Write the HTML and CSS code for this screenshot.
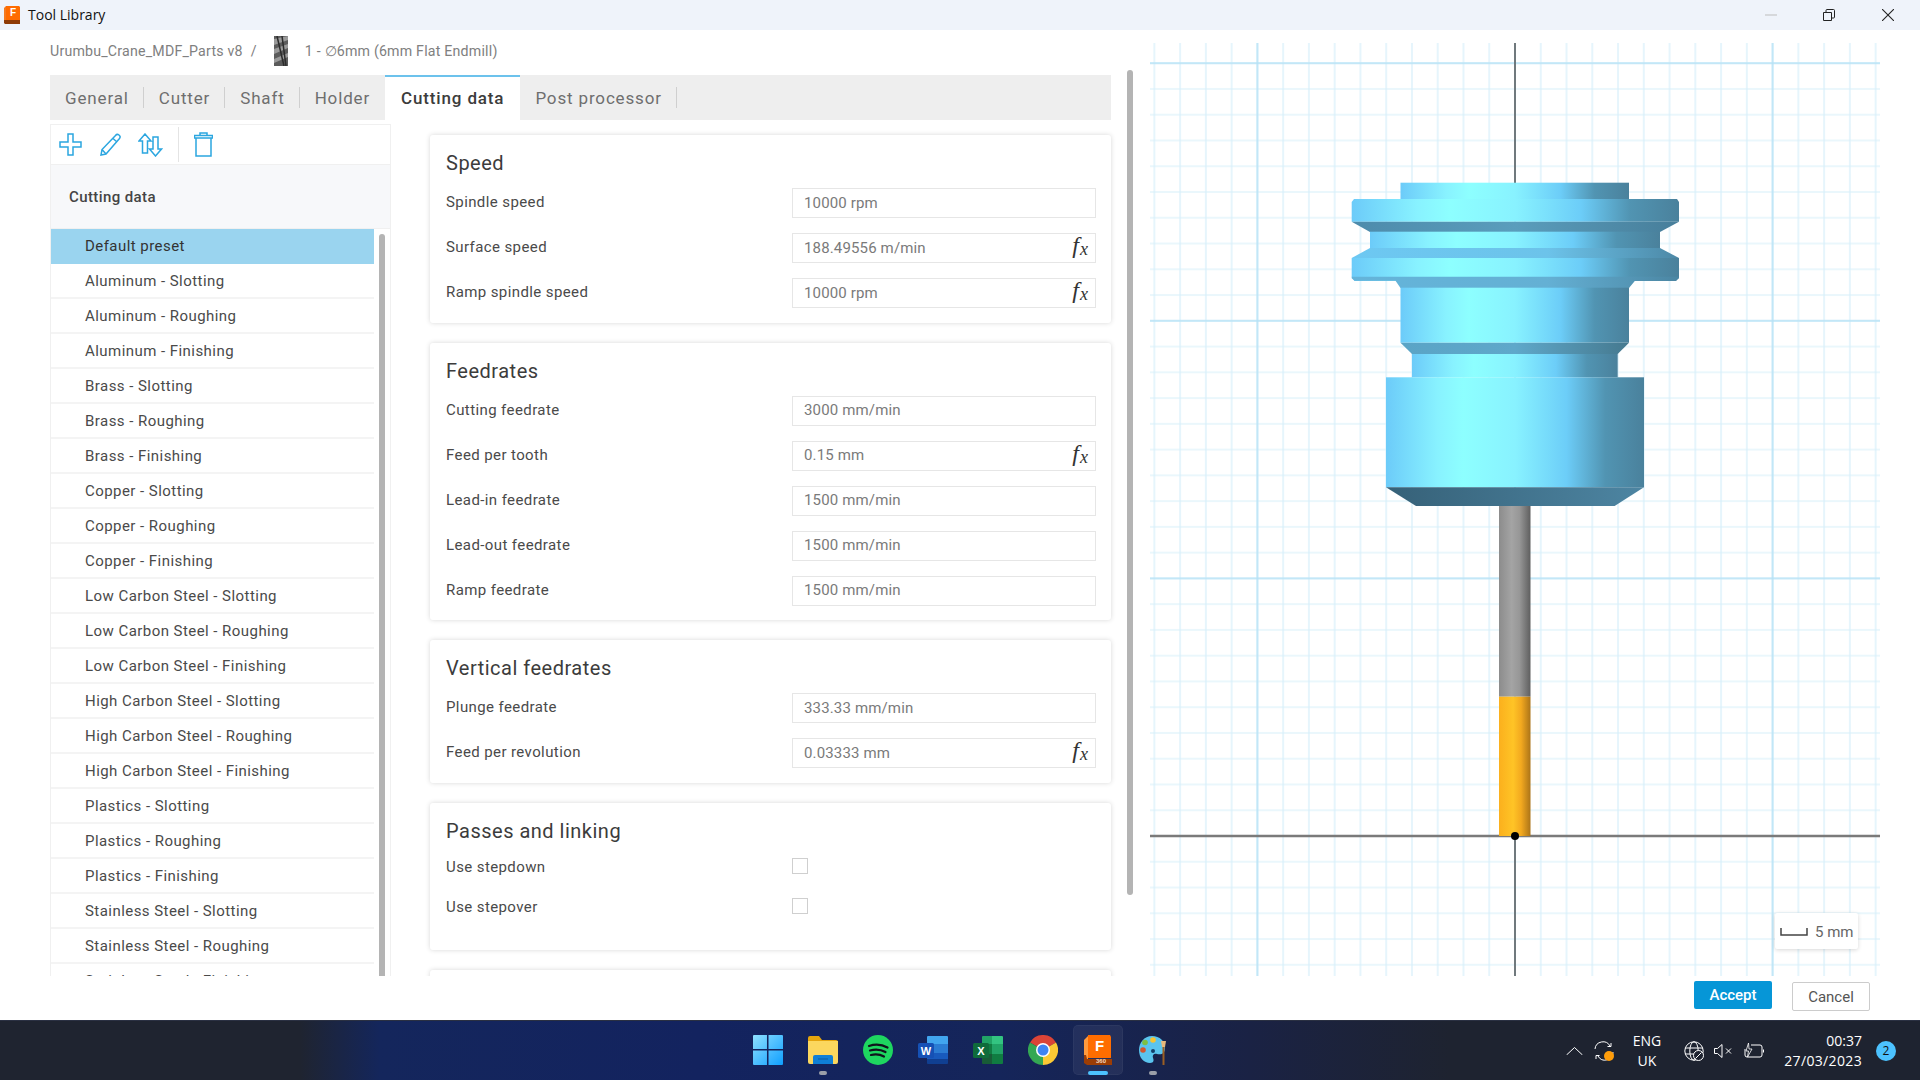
FILE: index.html
```html
<!DOCTYPE html>
<html lang="en">
<head>
<meta charset="utf-8">
<title>Tool Library</title>
<link rel="stylesheet" href="styles.css">
</head>
<body>
<div class="app">
  <header class="titlebar">
    <svg class="app-icon" viewBox="0 0 18 20"><path d="M1 3 3 1h13v15H1z" fill="#f47a20"/><path d="M3 1h13l1 1v13H3z" fill="#ff6b00"/><path d="M1 15h16v4H2l-1-1z" fill="#8f3b06"/><text x="10" y="11" class="app-icon-f">F</text></svg>
    <span class="title-text">Tool Library</span>
    <div class="window-controls">
      <svg class="wc wc-min" viewBox="0 0 12 12"><path d="M0 6h12" stroke="#bdbdbd" fill="none"/></svg>
      <svg class="wc wc-max" viewBox="0 0 12 12"><path d="M.5 3.5h8v8h-8z M3 3V1.5A1 1 0 0 1 4 .5h6.5a1 1 0 0 1 1 1V8a1 1 0 0 1-1 1H9" stroke="#222" fill="none"/></svg>
      <svg class="wc wc-close" viewBox="0 0 12 12"><path d="M0 0l12 12M12 0 0 12" stroke="#222" stroke-width="1.1" fill="none"/></svg>
    </div>
  </header>

  <main class="window">
    <div class="content">
      <section class="editor">
        <div class="crumb">
          <span>Urumbu_Crane_MDF_Parts v8</span>
          <span class="crumb-sep">/</span>
          <svg class="crumb-tool" viewBox="0 0 14 30">
            <rect width="14" height="30" fill="#5b5b5b"/>
            <path d="M0 3 14 0v4L0 9zM0 13l14-5v4L0 18zM0 23l14-6v4L0 27z" fill="#9a9a9a"/>
            <path d="M3 0 10 30M8 0l4 30" stroke="#2c2c2c" stroke-width="1.5" fill="none"/>
          </svg>
          <span>1 - ∅6mm (6mm Flat Endmill)</span>
        </div>
        <nav class="tabs">
          <span class="tab">General</span>
          <span class="tab">Cutter</span>
          <span class="tab">Shaft</span>
          <span class="tab tab-last">Holder</span>
          <span class="tab tab-active">Cutting data</span>
          <span class="tab">Post processor</span>
        </nav>
        <div class="work">
          <aside class="presets">
            <div class="toolbar">
              <svg class="tb tb-plus" viewBox="0 0 23 23"><path d="M9 1h5v8h8v5h-8v8H9v-8H1V9h8z" class="tb-line"/></svg>
              <svg class="tb tb-pen" viewBox="0 0 23 23"><path d="M16.5 2.5a2.5 2.5 0 0 1 4 3L7 21l-5 1 1-5.500zM14 5.500l4 3.500M3 16.500 7 21" class="tb-line"/></svg>
              <svg class="tb tb-swap" viewBox="0 0 25 24"><path d="M7 1 1 8h3.500v12h5V8H13zM17.500 23l6-7H20V4h-5v12h-3.500z" class="tb-line"/></svg>
              <span class="tb-divider"></span>
              <svg class="tb tb-trash" viewBox="0 0 19 25"><path d="M2 6h15v18H2zM.5 3.500h18V6H.5zM6 3.500V1h7v2.500" class="tb-line"/></svg>
            </div>
            <div class="preset-head">Cutting data</div>
            <div class="preset-body">
              <ul class="rows">
                <li class="row row-on">Default preset</li>
                <li class="row">Aluminum - Slotting</li>
                <li class="row">Aluminum - Roughing</li>
                <li class="row">Aluminum - Finishing</li>
                <li class="row">Brass - Slotting</li>
                <li class="row">Brass - Roughing</li>
                <li class="row">Brass - Finishing</li>
                <li class="row">Copper - Slotting</li>
                <li class="row">Copper - Roughing</li>
                <li class="row">Copper - Finishing</li>
                <li class="row">Low Carbon Steel - Slotting</li>
                <li class="row">Low Carbon Steel - Roughing</li>
                <li class="row">Low Carbon Steel - Finishing</li>
                <li class="row">High Carbon Steel - Slotting</li>
                <li class="row">High Carbon Steel - Roughing</li>
                <li class="row">High Carbon Steel - Finishing</li>
                <li class="row">Plastics - Slotting</li>
                <li class="row">Plastics - Roughing</li>
                <li class="row">Plastics - Finishing</li>
                <li class="row">Stainless Steel - Slotting</li>
                <li class="row">Stainless Steel - Roughing</li>
                <li class="row">Stainless Steel - Finishing</li>
              </ul>
              <div class="list-scroll"></div>
            </div>
          </aside>
          <div class="cards">
            <section class="card">
              <h2>Speed</h2>
              <div class="field"><label>Spindle speed</label><div class="input">10000 rpm</div></div>
              <div class="field"><label>Surface speed</label><div class="input">188.49556 m/min<span class="fx"><i>f</i><i class="fx-x">x</i></span></div></div>
              <div class="field"><label>Ramp spindle speed</label><div class="input">10000 rpm<span class="fx"><i>f</i><i class="fx-x">x</i></span></div></div>
            </section>
            <section class="card">
              <h2>Feedrates</h2>
              <div class="field"><label>Cutting feedrate</label><div class="input">3000 mm/min</div></div>
              <div class="field"><label>Feed per tooth</label><div class="input">0.15 mm<span class="fx"><i>f</i><i class="fx-x">x</i></span></div></div>
              <div class="field"><label>Lead-in feedrate</label><div class="input">1500 mm/min</div></div>
              <div class="field"><label>Lead-out feedrate</label><div class="input">1500 mm/min</div></div>
              <div class="field"><label>Ramp feedrate</label><div class="input">1500 mm/min</div></div>
            </section>
            <section class="card">
              <h2>Vertical feedrates</h2>
              <div class="field"><label>Plunge feedrate</label><div class="input">333.33 mm/min</div></div>
              <div class="field"><label>Feed per revolution</label><div class="input">0.03333 mm<span class="fx"><i>f</i><i class="fx-x">x</i></span></div></div>
            </section>
            <section class="card card-check">
              <h2>Passes and linking</h2>
              <div class="field field-check"><label>Use stepdown</label><div class="check-cell"><span class="check"></span></div></div>
              <div class="field field-check"><label>Use stepover</label><div class="check-cell"><span class="check"></span></div></div>
            </section>
            <section class="card card-next"></section>
          </div>
        </div>
        <div class="page-scroll"></div>
      </section>

      <section class="viewer">
        <svg class="viewer-svg" viewBox="1150 43 730 933">
          <defs>
            <pattern id="minor" patternUnits="userSpaceOnUse" x="1502.12" y="823.12" width="25.76" height="25.76">
              <path d="M12.880 0V25.760M0 12.880H25.760" stroke="#d6effa" stroke-width="1.2" fill="none"/>
            </pattern>
            <pattern id="major" patternUnits="userSpaceOnUse" x="1386.2" y="707.2" width="257.6" height="257.6">
              <path d="M128.800 0V257.600M0 128.800H257.600" stroke="#b6e2f6" stroke-width="1.500" fill="none"/>
            </pattern>
            <linearGradient id="bright">
              <stop offset="0" stop-color="#6ccbf9"/><stop offset=".2" stop-color="#88f2ff"/><stop offset=".3" stop-color="#8dffff"/><stop offset=".5" stop-color="#88f2ff"/><stop offset=".7" stop-color="#6ccdf8"/><stop offset=".85" stop-color="#5194b2"/><stop offset="1" stop-color="#4a819c"/>
            </linearGradient>
            <linearGradient id="ringDark"><stop offset="0" stop-color="#4d8bab"/><stop offset=".5" stop-color="#5a9dbc"/><stop offset="1" stop-color="#477e9a"/></linearGradient>
            <linearGradient id="ringMid"><stop offset="0" stop-color="#6dc8f2"/><stop offset=".6" stop-color="#6cc3ea"/><stop offset="1" stop-color="#4c88a6"/></linearGradient>
            <linearGradient id="ringLow"><stop offset="0" stop-color="#64b4da"/><stop offset=".6" stop-color="#64b0d4"/><stop offset="1" stop-color="#4b86a3"/></linearGradient>
            <linearGradient id="ringNeck"><stop offset="0" stop-color="#5aa4c6"/><stop offset=".5" stop-color="#5fa8ca"/><stop offset="1" stop-color="#45798f"/></linearGradient>
            <linearGradient id="ringBase"><stop offset="0" stop-color="#366178"/><stop offset="1" stop-color="#4d85a2"/></linearGradient>
            <linearGradient id="steel"><stop offset="0" stop-color="#8c8c8c"/><stop offset=".4" stop-color="#a4a4a4"/><stop offset=".65" stop-color="#979797"/><stop offset="1" stop-color="#5f5f5f"/></linearGradient>
            <linearGradient id="flute"><stop offset="0" stop-color="#fbb01d"/><stop offset=".45" stop-color="#ffc426"/><stop offset=".7" stop-color="#f3a91f"/><stop offset="1" stop-color="#ac7418"/></linearGradient>
          </defs>
          <rect x="1150" y="43" width="730" height="933" fill="url(#minor)"/>
          <rect x="1150" y="43" width="730" height="933" fill="url(#major)"/>
          <path d="M1515 43V183M1515 836V976" stroke="#555" stroke-width="1.500" fill="none"/>
          <path d="M1150 836H1880" stroke="#7a7a7a" stroke-width="2.500" fill="none"/>
          <rect x="1400.500" y="182.700" width="228.500" height="17" fill="url(#bright)"/>
          <path d="M1354 199H1677l2 3v19.700H1351.700V202z" fill="url(#bright)"/>
          <path d="M1351.700 221.700H1679L1660 232H1370z" fill="url(#ringDark)"/>
          <rect x="1370" y="231.700" width="290" height="16.500" fill="url(#bright)"/>
          <path d="M1370 248H1660L1679 258H1351.700z" fill="url(#ringMid)"/>
          <path d="M1351.700 258H1679v19l-3 4H1354.500l-2.800-4z" fill="url(#bright)"/>
          <path d="M1351.700 276.700H1679v1.500l-3 2.500H1635L1629 288H1400.500L1395.500 280.700H1354.500l-2.800-2.500z" fill="url(#ringLow)"/>
          <rect x="1400.500" y="287.700" width="228.500" height="55" fill="url(#bright)"/>
          <path d="M1400.500 342.700H1629L1617.700 354H1412z" fill="url(#ringNeck)"/>
          <rect x="1412" y="354" width="205.700" height="23.300" fill="url(#bright)"/>
          <rect x="1386" y="377.300" width="258" height="110" fill="url(#bright)"/>
          <path d="M1386 487.300H1644L1614.600 506H1416z" fill="url(#ringBase)"/>
          <rect x="1499" y="506" width="31.500" height="190.700" fill="url(#steel)"/>
          <rect x="1499" y="696.700" width="31.500" height="139.300" fill="url(#flute)"/>
          <circle cx="1515" cy="836" r="4" fill="#000"/>
        </svg>
        <div class="scale">
          <svg class="scale-mark" viewBox="0 0 28 8"><path d="M1 0V7H27V0" fill="none" stroke="#444" stroke-width="1.500"/></svg>
          <span>5 mm</span>
        </div>
      </section>
    </div>
    <footer class="actions">
      <button class="btn btn-primary">Accept</button>
      <button class="btn btn-plain">Cancel</button>
    </footer>
  </main>

  <footer class="taskbar">
    <span></span>
    <div class="task-icons">
      <div class="task"><svg class="ti" viewBox="0 0 29 29"><defs><linearGradient id="win" x1="0" y1="0" x2="1" y2="1"><stop offset="0" stop-color="#8fe0ff"/><stop offset="1" stop-color="#0f9fff"/></linearGradient></defs><path d="M1 0h12.500v13.500H0V1a1 1 0 0 1 1-1zM15 0h13a1 1 0 0 1 1 1v12.500H15zM0 15h13.500v14H1a1 1 0 0 1-1-1zM15 15h14v13a1 1 0 0 1-1 1H15z" fill="url(#win)"/></svg></div>
      <div class="task task-open"><svg class="ti" viewBox="0 0 30 28"><path d="M0 2a2 2 0 0 1 2-2h9l3 4h14a2 2 0 0 1 2 2v4H0z" fill="#e5a50d"/><path d="M0 5h30v21a2 2 0 0 1-2 2H2a2 2 0 0 1-2-2z" fill="#fbd75e"/><path d="M5 21a2 2 0 0 1 2-2h16a2 2 0 0 1 2 2v7H5z" fill="#0f7fd6"/><path d="M10 23h10" stroke="#0a5da3" stroke-width="1" fill="none"/></svg></div>
      <div class="task"><svg class="ti" viewBox="0 0 30 30"><circle cx="15" cy="15" r="15" fill="#1ed760"/><path d="M6 11c6-2 13-1.500 18.500 1.500M7 15.500c5-1.500 11-1 15.500 1.500M8 20c4-1 9-.7 13 1.500" stroke="#10141c" stroke-width="2.200" stroke-linecap="round" fill="none"/></svg></div>
      <div class="task"><svg class="ti" viewBox="0 0 30 28"><path d="M9 1a1 1 0 0 1 1-1h19a1 1 0 0 1 1 1v7H9z" fill="#41a5ee"/><path d="M9 8h21v9H9z" fill="#2b7cd3"/><path d="M9 17h21v6H9z" fill="#185abd"/><path d="M9 23h21v4a1 1 0 0 1-1 1H10a1 1 0 0 1-1-1z" fill="#103f91"/><rect y="7" width="16" height="15" rx="1.500" fill="#1551b5"/><text x="8" y="18.500" class="ti-letter">W</text></svg></div>
      <div class="task"><svg class="ti" viewBox="0 0 30 28"><path d="M9 1a1 1 0 0 1 1-1h9v8H9z" fill="#21a366"/><path d="M19 0h10a1 1 0 0 1 1 1v7H19z" fill="#33c481"/><path d="M9 8h10v10H9z" fill="#107c41"/><path d="M19 8h11v10H19z" fill="#21a366"/><path d="M9 18h10v10H10a1 1 0 0 1-1-1z" fill="#185c37"/><path d="M19 18h11v9a1 1 0 0 1-1 1H19z" fill="#107c41"/><rect y="7" width="16" height="15" rx="1.500" fill="#0f6b3b"/><text x="8" y="18.500" class="ti-letter">X</text></svg></div>
      <div class="task"><svg class="ti" viewBox="0 0 30 30"><path d="M15 15 2 7.500A15 15 0 0 1 28 7.500z" fill="#db4437"/><path d="M15 15 28 7.500A15 15 0 0 1 15 30z" fill="#fcc934"/><path d="M15 15V30A15 15 0 0 1 2 7.500z" fill="#34a853"/><circle cx="15" cy="15" r="7" fill="#fff"/><circle cx="15" cy="15" r="5.500" fill="#3f84f4"/></svg></div>
      <div class="task task-active"><svg class="ti" viewBox="0 0 28 30"><path d="M0 5 4 1v24H0z" fill="#ff9a3d"/><path d="M4 0h22l1 2v21H4z" fill="#ff6d00"/><path d="M0 20h2l1 4h25v6H3l-3-2z" fill="#9c3d05"/><text x="15.500" y="16" class="ti-f">F</text><text x="17" y="28" class="ti-360">360</text></svg></div>
      <div class="task task-open"><svg class="ti" viewBox="0 0 28 30"><path d="M13 1C5 1 0 8 0 15c0 8 5 13 11 13 4 0 4-3 3-5-1-3 1-5 4-4 4 1 8 0 8-6C26 6 21 1 13 1z" fill="#5ac4ee"/><circle cx="14" cy="5" r="2.800" fill="#f6c431"/><circle cx="6" cy="7.500" r="2.800" fill="#7fbf42"/><circle cx="4" cy="15" r="2.800" fill="#d2552e"/><circle cx="14" cy="16" r="2" fill="#12406a"/><path d="M22 6h5l-1 6h-3z" fill="#e7b97c"/><path d="M23.500 12h2v18h-2z" fill="#9b5f23"/></svg></div>
    </div>
    <div class="tray">
      <svg class="tr tr-chev" viewBox="0 0 17 8"><path d="M.5 8 8.500.5 16.500 8" fill="none" stroke="#fff" stroke-width="1"/></svg>
      <svg class="tr tr-sync" viewBox="0 0 20 20"><path d="M1 8a8 8 0 0 1 15-3M17 2v3.500h-3.500M19 11a8 8 0 0 1-15 4M2 18v-3.500h3.500" fill="none" stroke="#fff" stroke-width="1"/><circle cx="15" cy="15" r="5" fill="#ff9d0a"/></svg>
      <div class="lang"><span>ENG</span><span>UK</span></div>
      <svg class="tr tr-globe" viewBox="0 0 20 20"><circle cx="10" cy="10" r="9.200" fill="none" stroke="#fff"/><ellipse cx="10" cy="10" rx="4.200" ry="9.200" fill="none" stroke="#fff"/><path d="M1 7h18M1 13h18" stroke="#fff" fill="none"/><circle cx="14.500" cy="14.500" r="5" fill="#1e2330" stroke="#fff"/><path d="M11.500 17.500l6-6" stroke="#fff" fill="none"/></svg>
      <svg class="tr tr-vol" viewBox="0 0 19 14"><path d="M.5 4.500h3L8 .5v13l-4.500-4h-3zM12 4.500l5 5M17 4.500l-5 5" fill="none" stroke="#fff"/></svg>
      <svg class="tr tr-batt" viewBox="0 0 20 16"><path d="M7 2h9a2 2 0 0 1 2 2v8a2 2 0 0 1-2 2H3a2 2 0 0 1-2-2V6" fill="none" stroke="#fff"/><path d="M19 6.500h1v3h-1z" fill="#fff"/><path d="M4.500 0 2 8h2.500L3.500 14 8 6H5z" fill="#1e2330" stroke="#fff" stroke-width=".8"/></svg>
      <div class="clock"><span>00:37</span><span class="date">27/03/2023</span></div>
      <span class="badge">2</span>
    </div>
  </footer>
</div>
</body>
</html>
```
FILE: styles.css
```css
* { box-sizing: border-box; }
html, body { margin: 0; padding: 0; height: 100%; }
body { font-family: Roboto, "Liberation Sans", sans-serif; font-size: 15px; color: #4a4a4a; background: #fff; overflow: hidden; }
.app { width: 1920px; height: 1080px; display: flex; flex-direction: column; }

.titlebar { height: 30px; flex: none; background: #eff3fa; display: flex; align-items: center; padding-left: 3px; }
.app-icon { width: 18px; height: 20px; }
.app-icon-f { font: 700 10px "Liberation Sans", sans-serif; fill: #fff; text-anchor: middle; }
.title-text { margin-left: 7px; padding-bottom: 1px; font: 14px "Open Sans", sans-serif; color: #111; }
.window-controls { margin-left: auto; display: flex; align-items: center; padding-right: 26px; }
.wc { width: 12px; height: 12px; display: block; }
.wc-max { margin-left: 46px; }
.wc-close { margin-left: 47px; }

.window { flex: 1; display: flex; flex-direction: column; min-height: 0; background: #fff; }
.content { height: 946px; flex: none; display: flex; padding-left: 50px; }
.editor { width: 1083px; flex: none; display: flex; flex-direction: column; position: relative; }

.crumb { height: 45px; flex: none; display: flex; align-items: center; color: #808080; font-size: 14.2px; letter-spacing: .2px; padding-bottom: 4px; }
.crumb-sep { margin: 0 17px 0 8px; }
.crumb-tool { width: 14px; height: 30px; margin-right: 17px; }

.tabs { height: 45px; flex: none; width: 1061px; background: #eeeeee; display: flex; align-items: center; font-size: 17px; letter-spacing: .85px; color: #6e6e6e; }
.tab { height: 100%; display: flex; align-items: center; padding: 0 15px; position: relative; }
.tab::after { content: ""; position: absolute; right: 0; top: 12px; bottom: 12px; width: 1px; background: #cfcfcf; }
.tab-last::after, .tab-active::after { display: none; }
.tab-active { background: #fff; color: #3c3c3c; font-weight: 500; border-top: 2px solid #6cc2ec; padding: 0 16px 2px; }

.work { flex: 1; min-height: 0; display: flex; overflow: hidden; }

.presets { width: 341px; flex: none; margin-top: 4px; border: 1px solid #f0f0f0; border-bottom: 0; display: flex; flex-direction: column; min-height: 0; }
.toolbar { height: 40px; flex: none; display: flex; align-items: center; padding-left: 8px; border-bottom: 1px solid #f0f0f0; }
.tb { display: block; flex: none; }
.tb-line { fill: none; stroke: #2ba6e0; stroke-width: 1.5; }
.tb-plus { width: 23px; height: 23px; }
.tb-pen { width: 23px; height: 23px; margin-left: 17px; }
.tb-swap { width: 25px; height: 24px; margin-left: 16px; }
.tb-divider { width: 1px; height: 35px; background: #e4e4e4; margin: 0 15px; flex: none; }
.tb-trash { width: 19px; height: 25px; }
.preset-head { height: 64px; flex: none; background: #f7f8fa; display: flex; align-items: center; padding-left: 18px; font-weight: 500; font-size: 15px; letter-spacing: .4px; color: #444; border-bottom: 1px solid #f0f0f0; }
.preset-body { flex: 1; min-height: 0; display: flex; overflow: hidden; }
.rows { list-style: none; margin: 0 0 0 -1px; padding: 0; width: 324px; flex: none; }
.row { height: 35px; display: flex; align-items: center; padding-left: 35px; border-bottom: 2px solid #f4f4f4; color: #4a4a4a; font-size: 15px; letter-spacing: .45px; }
.row-on { background: #9ad4ef; border-bottom-color: #9ad4ef; color: #333; }
.list-scroll { width: 6px; flex: none; margin: 5px 0 0 5px; background: #b4b4b4; border-radius: 3px 3px 0 0; }

.cards { width: 701px; margin-left: 29px; padding: 15px 10px 0; flex: none; display: flex; flex-direction: column; gap: 20px; overflow: hidden; }
.card { flex: none; background: #fff; border-radius: 3px; box-shadow: 0 0 5px rgba(0,0,0,.16); padding: 15px 15px 14.5px 16px; display: flex; flex-direction: column; gap: 15px; }
.card h2 { margin: 0 0 -2px; height: 25px; line-height: 27px; font-weight: 400; font-size: 20px; letter-spacing: .5px; color: #3c3c3c; }
.card-check { padding-bottom: 31.5px; }
.card-check h2 { margin-bottom: -4px; }
.card-next { height: 40px; }
.field { display: flex; align-items: center; justify-content: space-between; height: 30px; }
.field label { font-size: 15px; letter-spacing: .4px; color: #4a4a4a; padding-bottom: 2px; }
.input { width: 304px; height: 30px; border: 1px solid #e6e6e6; padding: 0 0 1px 11px; display: flex; align-items: center; color: #7a7a7a; font-size: 15px; letter-spacing: .15px; position: relative; }
.fx { margin: -4px 7px 0 auto; font-family: "Liberation Serif", serif; font-size: 24px; letter-spacing: 0; color: #333; display: flex; align-items: baseline; }
.fx i { display: block; }
.fx-x { font-size: 18px; margin-left: 1px; position: relative; top: 2px; }
.field-check { height: 25px; }
.field-check label { padding: 2px 0 0; }
.check-cell { width: 304px; height: 25px; display: flex; align-items: center; }
.check { width: 16px; height: 16px; border: 1px solid #cfcfcf; display: block; }

.page-scroll { position: absolute; right: 0; top: 40px; width: 6px; height: 825px; background: #b4b4b4; border-radius: 3px; }

.viewer { width: 730px; flex: none; margin-left: 17px; padding-top: 13px; position: relative; }
.viewer-svg { display: block; width: 730px; height: 933px; }
.scale { position: absolute; left: 625px; top: 883px; width: 83px; height: 36px; background: #fff; box-shadow: 0 1px 4px rgba(0,0,0,.16); border-radius: 2px; display: flex; align-items: center; padding: 2px 0 0 5px; color: #666; font-size: 15px; }
.scale-mark { width: 28px; height: 8px; margin-right: 7px; }

.actions { flex: 1; display: flex; justify-content: flex-end; align-items: flex-start; gap: 20px; padding: 5px 50px 0 0; }
.btn { font: 500 15px Roboto, sans-serif; width: 78px; border-radius: 2px; padding: 0; }
.btn-primary { height: 28px; background: #0696d7; color: #fff; border: 0; }
.btn-plain { height: 29px; margin-top: 1px; background: #fff; color: #555; border: 1px solid #cccccc; font-weight: 400; }

.taskbar { height: 60px; flex: none; display: grid; grid-template-columns: 1fr auto 1fr; color: #fff; border-top: 1px solid #2a3042; background: linear-gradient(90deg, #1f2430 0, #1f2430 300px, #14265c 380px, #13235f 700px, #15255a 1000px, #1a2244 1250px, #1e2330 1450px, #1e2330 100%); }
.task-icons { display: flex; gap: 5px; padding-top: 4px; }
.task { width: 50px; height: 50px; display: flex; align-items: center; justify-content: center; position: relative; border-radius: 5px; }
.ti { width: 30px; height: 30px; display: block; }
.ti-letter { font: 700 11px "Liberation Sans", sans-serif; fill: #fff; text-anchor: middle; }
.ti-f { font: 700 15px "Liberation Sans", sans-serif; fill: #fff; text-anchor: middle; }
.ti-360 { font: 700 6px "Liberation Sans", sans-serif; fill: #f2d9c5; text-anchor: middle; }
.task-open::after, .task-active::after { content: ""; position: absolute; bottom: 0; height: 4px; border-radius: 2px; }
.task-open::after { width: 8px; left: 21px; background: #9b9fa8; }
.task-active { background: rgba(255,255,255,.06); box-shadow: inset 0 0 0 1px rgba(255,255,255,.04); }
.task-active::after { width: 20px; left: 15px; background: #4cc2ff; }

.tray { justify-self: end; display: flex; align-items: center; padding-right: 24px; width: 354px; font: 14px "Open Sans", sans-serif; }
.tr { display: block; flex: none; }
.tr-chev { width: 17px; height: 8px; }
.tr-sync { width: 20px; height: 20px; margin-left: 11px; }
.lang { width: 34px; margin-left: 16px; display: flex; flex-direction: column; align-items: center; line-height: 20px; }
.tr-globe { width: 20px; height: 20px; margin-left: 20px; }
.tr-vol { width: 19px; height: 14px; margin-left: 10px; }
.tr-batt { width: 20px; height: 16px; margin-left: 11px; }
.clock { margin-left: auto; display: flex; flex-direction: column; align-items: flex-end; line-height: 20px; }
.date { letter-spacing: .35px; }
.badge { width: 20px; height: 20px; margin-left: 14px; border-radius: 50%; background: #4cc2ff; color: #111; display: flex; align-items: center; justify-content: center; font-size: 12px; }
```
